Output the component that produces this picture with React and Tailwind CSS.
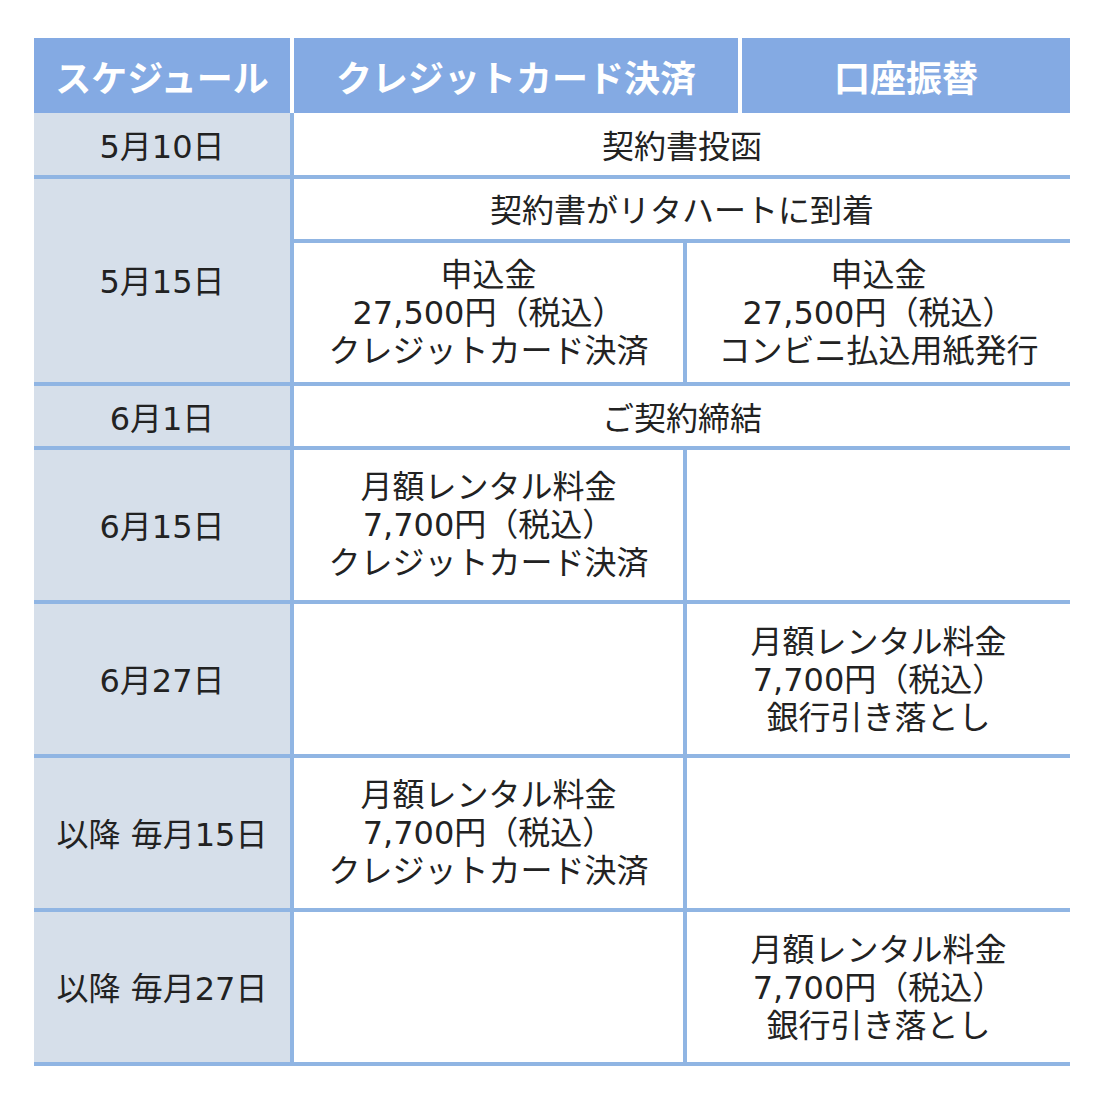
import React from "react";

const font = { fontFamily: '"DejaVu Sans", "Noto Sans CJK JP", sans-serif' };
const headFont = { fontFamily: '"Noto Sans CJK JP", "Noto Sans", sans-serif' };

function Cell({ children, className = "" }) {
  return (
    <div className={`flex flex-col items-center justify-center text-center bg-white ${className}`}>
      {children}
    </div>
  );
}

function DateCell({ children, className = "" }) {
  return (
    <div className={`flex items-center justify-center pt-[3px] bg-[#d6dfea] ${className}`}>
      {children}
    </div>
  );
}

function Lines({ lines }) {
  return lines.map((l, i) => <span key={i}>{l}</span>);
}

const rental = ["月額レンタル料金", "7,700円（税込）", "クレジットカード決済"];
const bank = ["月額レンタル料金", "7,700円（税込）", "銀行引き落とし"];

export default function App() {
  return (
    <div className="min-h-[1100px] w-[1108px] bg-white pt-[38px] px-[34px]">
      {/* Header */}
      <div
        className="grid w-[1036px] grid-cols-[256px_444px_328px] gap-x-[4px] h-[75px] text-white font-bold text-[36px]"
        style={headFont}
      >
        <div className="flex items-center justify-center bg-[#84aae3]">スケジュール</div>
        <div className="flex items-center justify-center bg-[#84aae3]">クレジットカード決済</div>
        <div className="flex items-center justify-center bg-[#84aae3]">口座振替</div>
      </div>

      {/* Body */}
      <div
        className="grid w-[1036px] grid-cols-[256px_389px_383px] grid-rows-[62px_60px_139px_60px_150px_150px_150px_150px] gap-[4px] pb-[4px] bg-[#90b5e3] text-[#222] text-[32px] leading-[38px]"
        style={font}
      >
        <DateCell className="pt-[6px]">5月10日</DateCell>
        <Cell className="col-span-2 pt-[6px]">契約書投函</Cell>

        <DateCell className="row-span-2">5月15日</DateCell>
        <Cell className="col-span-2 pt-[4px]">契約書がリタハートに到着</Cell>
        <Cell><Lines lines={["申込金", "27,500円（税込）", "クレジットカード決済"]} /></Cell>
        <Cell><Lines lines={["申込金", "27,500円（税込）", "コンビニ払込用紙発行"]} /></Cell>

        <DateCell className="pt-[6px]">6月1日</DateCell>
        <Cell className="col-span-2 pt-[6px]">ご契約締結</Cell>

        <DateCell className="pt-[4px]">6月15日</DateCell>
        <Cell><Lines lines={rental} /></Cell>
        <Cell />

        <DateCell className="pt-[4px]">6月27日</DateCell>
        <Cell />
        <Cell className="pt-[2px]"><Lines lines={bank} /></Cell>

        <DateCell className="pt-[4px]">以降 毎月15日</DateCell>
        <Cell><Lines lines={rental} /></Cell>
        <Cell />

        <DateCell className="pt-[4px]">以降 毎月27日</DateCell>
        <Cell />
        <Cell className="pt-[2px]"><Lines lines={bank} /></Cell>
      </div>
    </div>
  );
}
